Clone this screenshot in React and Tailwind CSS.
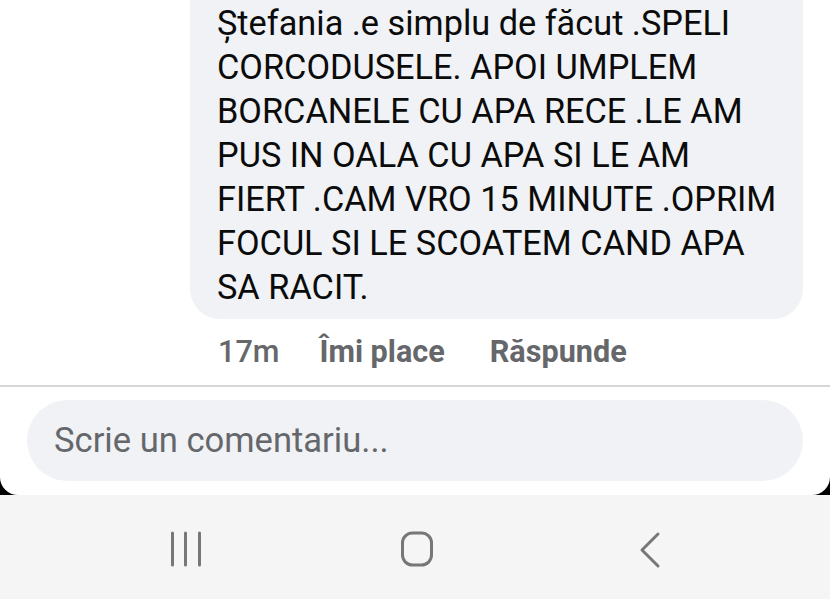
import React from "react";

const lines = [
  "Ștefania .e simplu de făcut .SPELI",
  "CORCODUSELE. APOI UMPLEM",
  "BORCANELE CU APA RECE .LE AM",
  "PUS IN OALA CU APA SI LE AM",
  "FIERT .CAM VRO 15 MINUTE .OPRIM",
  "FOCUL SI LE SCOATEM CAND APA",
  "SA RACIT.",
];

export default function App() {
  return (
    <div
      className="w-[830px] h-[599px] overflow-hidden bg-black flex flex-col"
      style={{ fontFamily: "Roboto, 'Liberation Sans', sans-serif" }}
    >
      {/* comment area */}
      <div className="bg-white h-[495px] rounded-b-[18px] flex flex-col">
        <div className="pl-[190px] pr-[27px]">
          <div className="bg-[#f0f2f5] rounded-[30px] -mt-[30px] pt-[31px] pb-[10px] pl-[27px] pr-4">
            {lines.map((l, i) => (
              <div key={i} className="text-[34.3px] leading-[44px] text-[#0b0b0b] whitespace-nowrap">
                {l}
              </div>
            ))}
          </div>
          <div className="flex items-center gap-[40px] pl-[28px] h-[66px] text-[30.6px] text-[#65676b]">
            <span className="font-medium">17m</span>
            <span className="font-bold">Îmi place</span>
            <span className="font-bold ml-[5px]">Răspunde</span>
          </div>
        </div>
        <div className="h-[2px] bg-[#d6d6d6]" />
        <div className="px-[27px] pt-[13px]">
          <div className="h-[81px] rounded-full bg-[#f0f2f5] flex items-center pl-[27px] text-[34.6px] text-[#65676b]">
            Scrie un comentariu...
          </div>
        </div>
      </div>

      {/* navigation bar */}
      <div className="flex-1 bg-[#f5f5f5] flex items-start pt-[36px]">
        <div className="w-[830px] flex justify-between pl-[170px] pr-[168px]">
          <svg width="32" height="36" viewBox="0 0 32 36">
            <g stroke="#777" strokeWidth="3" strokeLinecap="round">
              <line x1="2.5" y1="2" x2="2.5" y2="34" />
              <line x1="15.5" y1="2" x2="15.5" y2="34" />
              <line x1="29.5" y1="2" x2="29.5" y2="34" />
            </g>
          </svg>
          <svg width="34" height="36" viewBox="0 0 34 36" className="-ml-[6px]">
            <rect x="2.5" y="2" width="29" height="32" rx="10" fill="none" stroke="#777" strokeWidth="3" />
          </svg>
          <svg width="24" height="38" viewBox="0 0 24 38">
            <polyline points="20,3 4,19 20,35" fill="none" stroke="#777" strokeWidth="3" strokeLinecap="round" strokeLinejoin="round" />
          </svg>
        </div>
      </div>
    </div>
  );
}
